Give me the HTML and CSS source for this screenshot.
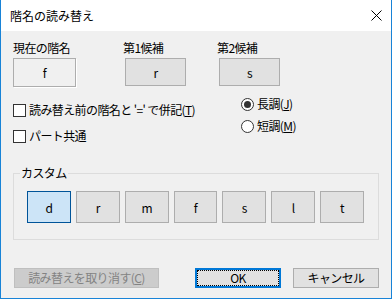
FILE: index.html
```html
<!DOCTYPE html>
<html lang="ja">
<head>
  <meta charset="UTF-8">
  <title>階名の読み替え</title>
  <link rel="stylesheet" href="styles.css">
</head>
<body>

  <div class="window">
    <div class="titlebar">
      <span class="title">階名の読み替え</span>
      <svg class="close" width="11" height="11" viewBox="0 0 11 11">
        <path d="M0.5 0.5 L10.5 10.5 M10.5 0.5 L0.5 10.5" stroke="#000" stroke-width="1" fill="none"/>
      </svg>
    </div>

    <div class="content">
      <div class="fields">
        <div class="field field-current">
          <div class="field-label">現在の階名</div>
          <div class="name-box current">f</div>
        </div>
        <div class="field field-cand1">
          <div class="field-label">第1候補</div>
          <div class="name-box">r</div>
        </div>
        <div class="field">
          <div class="field-label">第2候補</div>
          <div class="name-box">s</div>
        </div>
      </div>

      <div class="options">
        <div class="checks">
          <label class="option"><span class="checkbox"></span>読み替え前の階名と '=' で併記(<u>T</u>)</label>
          <label class="option"><span class="checkbox"></span>パート共通</label>
        </div>
        <div class="radios">
          <label class="option"><span class="radio checked"></span>長調(<u>J</u>)</label>
          <label class="option"><span class="radio"></span>短調(<u>M</u>)</label>
        </div>
      </div>

      <fieldset class="custom">
        <legend>カスタム</legend>
        <div class="syllables">
          <div class="syl selected">d</div>
          <div class="syl">r</div>
          <div class="syl">m</div>
          <div class="syl">f</div>
          <div class="syl">s</div>
          <div class="syl">l</div>
          <div class="syl">t</div>
        </div>
      </fieldset>

      <div class="actions">
        <div class="btn btn-undo disabled">読み替えを取り消す(<u>C</u>)</div>
        <div class="btn btn-ok focused">OK</div>
        <div class="btn btn-cancel">キャンセル</div>
      </div>
    </div>
  </div>

</body>
</html>
```

FILE: styles.css
```css
body {
  margin: 0;
  font-family: "Noto Sans CJK JP", "Noto Sans", sans-serif;
  font-size: 12px;
  letter-spacing: -0.6px;
  color: #000;
}

.window {
  width: 392px;
  height: 299px;
  box-sizing: border-box;
  border: 1px solid #1883d7;
  border-top: none;
  background: #f0f0f0;
  display: flex;
  flex-direction: column;
}

.titlebar {
  height: 31px;
  background: #fff;
  display: flex;
  align-items: center;
  padding: 0 9px 0 9px;
  flex-shrink: 0;
}

.title {
  line-height: 16px;
  letter-spacing: 0;
  flex: 1;
}

.close {
  display: block;
}

.content {
  padding: 9px 12px 0 12px;
}

.fields {
  display: flex;
}

.field-current {
  width: 110px;
}

.field-cand1 {
  width: 94px;
}

.field-label {
  line-height: 16px;
  height: 16px;
}

.name-box {
  width: 61px;
  height: 28px;
  box-sizing: border-box;
  margin: 2px 0 0 2px;
  border: 1px solid #adadad;
  background: #e1e1e1;
  display: flex;
  align-items: center;
  justify-content: center;
}

.name-box.current {
  width: 63px;
  height: 29px;
  margin-left: 0;
  background: #f0f0f0;
  box-shadow: 1px 1px 0 #fff;
}

.options {
  display: flex;
}

.checks {
  width: 228px;
  padding-top: 15px;
  display: flex;
  flex-direction: column;
  gap: 10px;
}

.radios {
  padding-top: 9px;
  display: flex;
  flex-direction: column;
  gap: 6px;
}

.option {
  display: flex;
  align-items: center;
  height: 16px;
  line-height: 16px;
  white-space: nowrap;
}

.checkbox {
  width: 13px;
  height: 13px;
  box-sizing: border-box;
  border: 1px solid #333;
  background: #fff;
  margin-right: 3px;
}

.radio {
  width: 13px;
  height: 13px;
  box-sizing: border-box;
  border: 1px solid #333;
  border-radius: 50%;
  background: #fff;
  margin-right: 3px;
  display: flex;
  align-items: center;
  justify-content: center;
}

.radio.checked::after {
  content: "";
  width: 7px;
  height: 7px;
  border-radius: 50%;
  background: #333;
}

u {
  text-decoration-thickness: 1px;
  text-underline-offset: 1px;
}

.custom {
  margin: 21px 0 0 0;
  padding: 10px 14px 16px 13px;
  border: 1px solid #dcdcdc;
  min-width: 0;
}

.custom legend {
  margin-left: -7px;
  padding: 0 1px;
  line-height: 16px;
}

.syllables {
  display: flex;
  gap: 5px;
}

.syl {
  width: 44px;
  height: 32px;
  box-sizing: border-box;
  border: 1px solid #adadad;
  background: #e1e1e1;
  display: flex;
  align-items: center;
  justify-content: center;
}

.syl.selected {
  background: #cce4f7;
  border-color: #005499;
}

.actions {
  display: flex;
  margin-top: 28px;
  padding-left: 1px;
}

.btn {
  height: 20px;
  box-sizing: border-box;
  border: 1px solid #adadad;
  background: #e1e1e1;
  display: flex;
  align-items: center;
  justify-content: center;
  line-height: 16px;
}

.btn-undo {
  width: 145px;
}

.btn.disabled {
  background: #cccccc;
  border-color: #bfbfbf;
  color: #838383;
}

.btn-ok {
  width: 86px;
  margin-left: 36px;
}

.btn.focused {
  border: 2px solid #0078d7;
  outline: 1px dotted #000;
  outline-offset: -3px;
}

.btn-cancel {
  width: 86px;
  margin-left: 12px;
}
```
